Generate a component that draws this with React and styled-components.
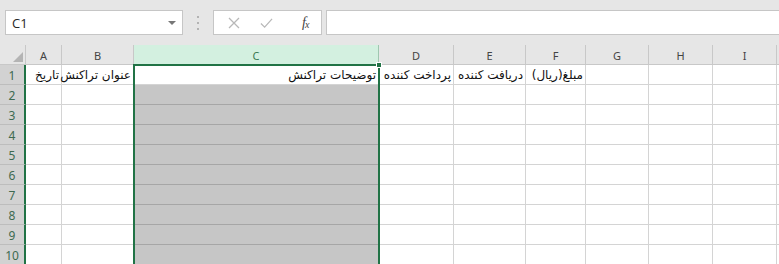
import React from 'react';
import styled, { createGlobalStyle } from 'styled-components';

const GlobalStyle = createGlobalStyle`
  html, body {
    margin: 0;
    padding: 0;
    background: #ffffff;
    overflow: hidden;
  }
  * {
    box-sizing: border-box;
  }
`;

const green = '#217346';

const Page = styled.div`
  width: 779px;
  height: 264px;
  overflow: hidden;
  font-family: "Noto Sans", "DejaVu Sans", sans-serif;
`;

const FormulaBar = styled.div`
  height: 45px;
  background: #e6e6e6;
  display: flex;
  align-items: center;
  padding-left: 5px;
`;

const NameBox = styled.div`
  width: 178px;
  height: 25px;
  background: #fff;
  border: 1px solid #c6c6c6;
  display: flex;
  align-items: center;
  justify-content: space-between;
  padding: 0 6px 0 6px;
  font-family: "Open Sans", "Noto Sans", sans-serif;
  font-size: 13px;
  color: #262626;
`;

const Caret = styled.span`
  width: 0;
  height: 0;
  border-left: 4px solid transparent;
  border-right: 4px solid transparent;
  border-top: 4px solid #777;
`;

const Grip = styled.div`
  width: 30px;
  display: flex;
  flex-direction: column;
  align-items: center;
  gap: 4px;
`;

const GripDot = styled.span`
  width: 2px;
  height: 2px;
  background: #b3b3b3;
`;

const ButtonGroup = styled.div`
  width: 109px;
  height: 25px;
  background: #fff;
  border: 1px solid #c6c6c6;
  display: flex;
  align-items: center;
  padding-left: 13px;
  gap: 20px;
`;

const IconSlot = styled.span`
  width: 13px;
  height: 13px;
  display: flex;
  align-items: center;
  justify-content: center;
`;

const Fx = styled.span`
  font-family: "Liberation Serif", "DejaVu Serif", serif;
  font-style: italic;
  font-size: 14px;
  color: #444;
  margin-left: 9px;
  letter-spacing: -1px;

  & sub {
    font-size: 10px;
    vertical-align: -1px;
  }
`;

const FormulaInput = styled.div`
  flex: 1;
  height: 25px;
  margin-left: 4px;
  background: #fff;
  border: 1px solid #c6c6c6;
  border-right: none;
`;

const Sheet = styled.div`
  display: grid;
  grid-template-columns: 26px 36px 72px 245px 75px 72px 60px 63px 64px 64px 1fr;
  grid-template-rows: repeat(11, 20px);
  position: relative;
`;

const Corner = styled.div`
  background: #e6e6e6;
  border-right: 1px solid #c8c8c8;
  border-bottom: 1px solid #c8c8c8;
  display: flex;
  align-items: flex-end;
  justify-content: flex-end;
  padding: 0 2px 2px 0;
`;

const ColHeader = styled.div`
  background: ${p => (p.$selected ? '#d3f0e0' : '#e6e6e6')};
  color: ${p => (p.$selected ? '#3c7a55' : '#444')};
  border-right: 1px solid ${p => (p.$selected ? '#9fc7b0' : '#c8c8c8')};
  border-bottom: 1px solid #c8c8c8;
  display: flex;
  align-items: center;
  justify-content: center;
  font-size: 11px;
  padding-top: 1px;
`;

const RowHeader = styled.div`
  background: #d2d2d2;
  color: #3d6a50;
  border-right: 2px solid ${green};
  border-bottom: 1px solid #bdbdbd;
  display: flex;
  align-items: center;
  justify-content: center;
  font-size: 12px;
  padding-top: 1px;
`;

const Cell = styled.div`
  background: ${p => (p.$shaded ? '#c6c6c6' : '#fff')};
  border-right: 1px solid ${p => (p.$shaded ? '#c6c6c6' : '#d4d4d4')};
  border-bottom: 1px solid ${p => (p.$shaded ? '#a6a6a6' : '#d4d4d4')};
  display: flex;
  align-items: flex-end;
  justify-content: flex-start;
  padding: 0 2px 2px 2px;
  white-space: nowrap;
  direction: rtl;
  font-family: "DejaVu Sans", "Noto Sans", sans-serif;
  font-size: 12px;
  color: #111;
  overflow: visible;
  min-width: 0;
`;

const SelectionBox = styled.div`
  position: absolute;
  grid-column: 4 / 5;
  grid-row: 2 / 12;
  top: -1px;
  left: -1px;
  right: -1px;
  bottom: 0;
  border: 2px solid ${green};
  border-bottom: none;
  pointer-events: none;
  z-index: 2;
`;

const FillHandle = styled.span`
  position: absolute;
  top: -4px;
  right: -4px;
  width: 6px;
  height: 6px;
  background: ${green};
  border: 1px solid #fff;
`;

const columns = ['A', 'B', 'C', 'D', 'E', 'F', 'G', 'H', 'I', ''];

const headings = {
  A: 'تاریخ',
  B: 'عنوان تراکنش',
  C: 'توضیحات تراکنش',
  D: 'پرداخت کننده',
  E: 'دریافت کننده',
  F: 'مبلغ(ریال)',
};

const CloseIcon = () => (
  <svg width="12" height="12" viewBox="0 0 12 12">
    <path d="M1 1 L11 11 M11 1 L1 11" stroke="#b8b8b8" strokeWidth="1.3" fill="none" />
  </svg>
);

const CheckIcon = () => (
  <svg width="14" height="12" viewBox="0 0 14 12">
    <path d="M1 6.5 L5 10.5 L13 1.5" stroke="#b8b8b8" strokeWidth="1.3" fill="none" />
  </svg>
);

const CornerTriangle = () => (
  <svg width="10" height="10" viewBox="0 0 10 10">
    <polygon points="10,0 10,10 0,10" fill="#b4b4b4" />
  </svg>
);

export default function App() {
  const rows = [1, 2, 3, 4, 5, 6, 7, 8, 9, 10];
  return (
    <Page>
      <GlobalStyle />
      <FormulaBar>
        <NameBox>
          C1
          <Caret />
        </NameBox>
        <Grip>
          <GripDot />
          <GripDot />
          <GripDot />
        </Grip>
        <ButtonGroup>
          <IconSlot><CloseIcon /></IconSlot>
          <IconSlot><CheckIcon /></IconSlot>
          <Fx>f<sub>x</sub></Fx>
        </ButtonGroup>
        <FormulaInput />
      </FormulaBar>
      <Sheet>
        <Corner><CornerTriangle /></Corner>
        {columns.map((c, i) => (
          <ColHeader key={`h${i}`} $selected={c === 'C'}>{c}</ColHeader>
        ))}
        {rows.map(r => (
          <React.Fragment key={r}>
            <RowHeader>{r}</RowHeader>
            {columns.map((c, i) => (
              <Cell key={`${i}-${r}`} $shaded={c === 'C' && r > 1}>
                {r === 1 ? headings[c] : null}
              </Cell>
            ))}
          </React.Fragment>
        ))}
        <SelectionBox>
          <FillHandle />
        </SelectionBox>
      </Sheet>
    </Page>
  );
}
